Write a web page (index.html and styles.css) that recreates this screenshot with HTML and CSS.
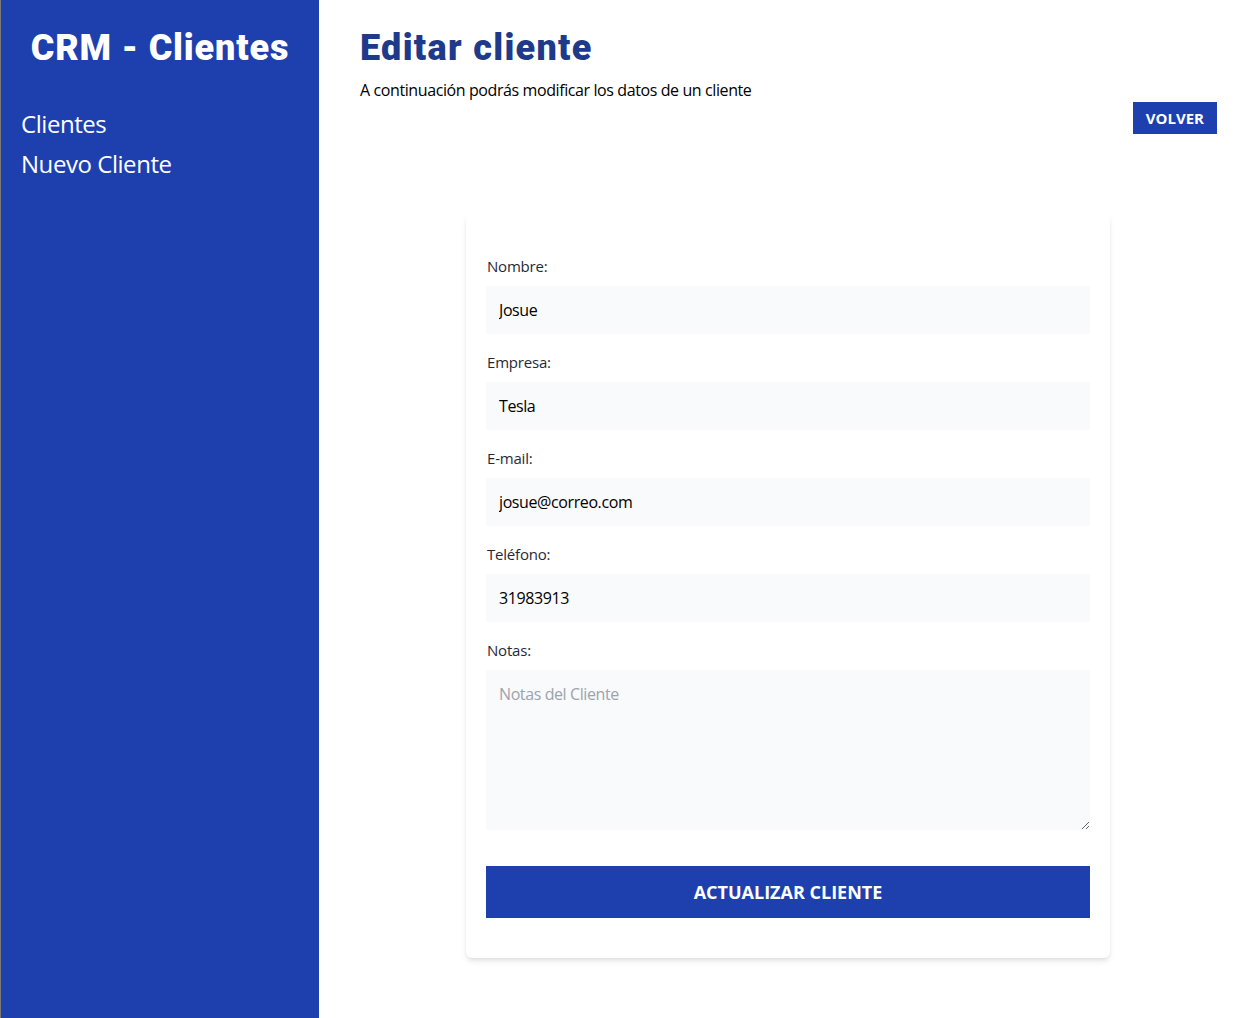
FILE: index.html
```html
<!DOCTYPE html>
<html lang="es">
<head>
<meta charset="utf-8">
<title>CRM - Clientes</title>
<link rel="stylesheet" href="styles.css">
</head>
<body>
<div class="layout">
  <aside class="sidebar">
    <h2 class="brand">CRM - Clientes</h2>
    <nav class="nav">
      <a href="#" class="nav-link">Clientes</a>
      <a href="#" class="nav-link">Nuevo Cliente</a>
    </nav>
  </aside>
  <main class="main">
    <h1 class="title">Editar cliente</h1>
    <p class="subtitle">A continuación podrás modificar los datos de un cliente</p>
    <div class="actions">
      <button class="btn-back">Volver</button>
    </div>
    <div class="card">
      <form class="form">
        <div class="field">
          <label class="label" for="nombre">Nombre:</label>
          <input class="input" id="nombre" type="text" value="Josue">
        </div>
        <div class="field">
          <label class="label" for="empresa">Empresa:</label>
          <input class="input" id="empresa" type="text" value="Tesla">
        </div>
        <div class="field">
          <label class="label" for="email">E-mail:</label>
          <input class="input" id="email" type="email" value="josue@correo.com">
        </div>
        <div class="field">
          <label class="label" for="telefono">Teléfono:</label>
          <input class="input" id="telefono" type="tel" value="31983913">
        </div>
        <div class="field">
          <label class="label" for="notas">Notas:</label>
          <textarea class="input textarea" id="notas" placeholder="Notas del Cliente"></textarea>
        </div>
        <button type="submit" class="btn-submit">Actualizar Cliente</button>
      </form>
    </div>
  </main>
</div>
</body>
</html>
```
FILE: styles.css
```css
* { box-sizing: border-box; }
html, body { margin: 0; padding: 0; }
body {
  font-family: "Open Sans", "Noto Sans", sans-serif;
  color: #000;
  background: #fff;
}
.layout {
  display: flex;
  min-height: 1018px;
  border-left: 1px solid #7a7a7a;
}
.sidebar {
  width: 318px;
  flex-shrink: 0;
  background: #1e40af;
  padding: 28px 20px;
}
.brand {
  margin: 0;
  font-family: "Roboto", sans-serif;
  font-weight: 900;
  font-size: 36px;
  line-height: 40px;
  letter-spacing: 0.85px;
  color: #fff;
  text-align: center;
}
.nav {
  display: flex;
  flex-direction: column;
  margin-top: 40px;
}
.nav-link {
  color: #fff;
  text-decoration: none;
  font-size: 24px;
  line-height: 32px;
  letter-spacing: -0.45px;
  margin-top: 8px;
}
.nav-link:first-child { margin-top: 0; }
.main {
  flex: 1;
  padding: 28px 18px 40px 41px;
}
.title {
  margin: 0;
  font-family: "Roboto", sans-serif;
  font-weight: 900;
  font-size: 36px;
  line-height: 40px;
  letter-spacing: 1.3px;
  color: #1e3a8a;
}
.subtitle {
  margin: 10px 0 0;
  font-size: 16px;
  line-height: 24px;
  letter-spacing: -0.4px;
}
.actions {
  display: flex;
  justify-content: flex-end;
  margin-right: -1px;
}
.btn-back {
  background: #1e40af;
  color: #fff;
  border: 0;
  font-family: inherit;
  font-weight: 700;
  font-size: 15px;
  line-height: 20px;
  padding: 6px 13px;
  text-transform: uppercase;
  cursor: pointer;
}
.card {
  width: 644px;
  margin: 80px auto 0;
  background: #fff;
  border-radius: 6px;
  box-shadow: 0 4px 6px -1px rgba(0,0,0,0.1), 0 2px 4px -1px rgba(0,0,0,0.06);
  padding: 40px 20px;
}
.form { display: flex; flex-direction: column; }
.field { margin-bottom: 16px; }
.label {
  display: block;
  color: #1f2937;
  font-size: 15px;
  line-height: 24px;
  letter-spacing: -0.2px;
  padding-left: 1px;
  margin-bottom: 8px;
}
.input {
  display: block;
  width: 100%;
  background: #f9fafb;
  border: 0;
  padding: 12px 12px 12px 13px;
  font-family: inherit;
  font-size: 16px;
  line-height: 24px;
  letter-spacing: -0.4px;
  color: #000;
  outline: none;
}
.input::placeholder { color: #9ca3af; }
.textarea {
  height: 160px;
  resize: vertical;
}
.btn-submit {
  margin-top: 20px;
  background: #1e40af;
  color: #fff;
  border: 0;
  font-family: inherit;
  font-weight: 700;
  font-size: 18px;
  line-height: 28px;
  padding: 12px;
  text-transform: uppercase;
  cursor: pointer;
}
```
